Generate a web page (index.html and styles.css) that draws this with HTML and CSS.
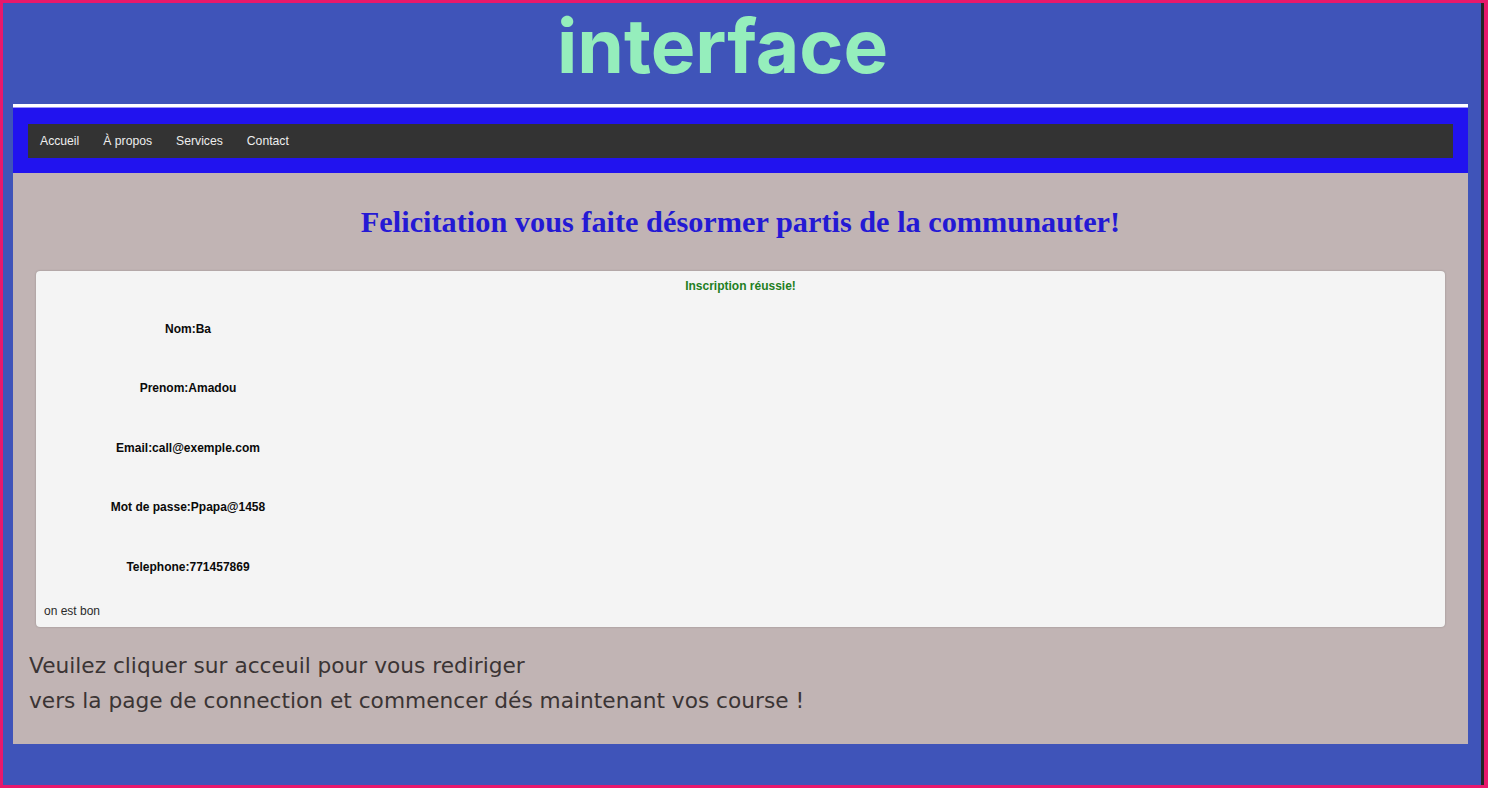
FILE: index.html
```html
<!DOCTYPE html>
<html lang="fr">
<head>
<meta charset="utf-8">
<title>interface</title>
<link rel="stylesheet" href="styles.css">
</head>
<body>
<div class="frame">
  <div class="page">
    <header class="header">
      <h1 class="title">interface</h1>
    </header>
    <nav class="nav-wrap">
      <ul class="nav-bar">
        <li><a class="nav-link" href="#">Accueil</a></li>
        <li><a class="nav-link" href="#">À propos</a></li>
        <li><a class="nav-link" href="#">Services</a></li>
        <li><a class="nav-link" href="#">Contact</a></li>
      </ul>
    </nav>
    <main class="content">
      <h2 class="congrats">Felicitation vous faite désormer partis de la communauter!</h2>
      <section class="card">
        <p class="success">Inscription réussie!</p>
        <div class="fields">
          <p class="field">Nom:Ba</p>
          <p class="field">Prenom:Amadou</p>
          <p class="field">Email:call@exemple.com</p>
          <p class="field">Mot de passe:Ppapa@1458</p>
          <p class="field">Telephone:771457869</p>
        </div>
        <p class="note">on est bon</p>
      </section>
      <p class="redirect">Veuilez cliquer sur acceuil pour vous rediriger<br>vers la page de connection et commencer dés maintenant vos course !</p>
    </main>
  </div>
</div>
</body>
</html>
```

FILE: styles.css
```css
* { box-sizing: border-box; }
html, body { margin: 0; padding: 0; }
body {
  width: 1488px;
  height: 788px;
  overflow: hidden;
  font-family: "Liberation Sans", Arial, sans-serif;
}
.frame {
  height: 788px;
  border: 3px solid #e8186c;
  border-right-width: 4px;
}
.page {
  height: 100%;
  background: #3f54b9;
  border-right: 3px solid #262626;
  padding: 0 13px 0 10px;
}
.header {
  height: 101px;
  padding-right: 36px;
  text-align: center;
}
.title {
  margin: 0;
  font-family: Inter, "Liberation Sans", sans-serif;
  font-weight: 700;
  font-size: 75px;
  line-height: 85px;
  color: #95eebc;
}
.nav-wrap {
  border-top: 3px solid #ffffff;
  background: #2113ef;
  padding: 17px 15px 15px;
  box-shadow: inset 0 1px 0 #9a94f4;
}
.nav-bar {
  list-style: none;
  margin: 0;
  padding: 0;
  height: 34px;
  background: #333333;
  display: flex;
  align-items: center;
}
.nav-link {
  display: block;
  padding: 0 12px;
  color: #eeeeee;
  text-decoration: none;
  font-size: 12.2px;
  line-height: 34px;
}
.content {
  background: #c1b4b4;
  height: 571px;
  padding: 30px 16px 0;
}
.congrats {
  margin: 0 0 30px;
  text-align: center;
  font-family: "Liberation Serif", "Times New Roman", serif;
  font-weight: 700;
  font-size: 30.3px;
  line-height: 38px;
  color: #2419d4;
}
.card {
  margin: 0 7px;
  background: #f4f4f4;
  border-radius: 4px;
  box-shadow: 0 0 2px rgba(0,0,0,0.25);
  padding: 8px 8px 9px;
  height: 356px;
}
.success {
  margin: 0;
  text-align: center;
  font-size: 12px;
  line-height: 14px;
  font-weight: 700;
  color: #1f7f1f;
}
.fields {
  width: 288px;
  margin-top: 29px;
  display: flex;
  flex-direction: column;
  gap: 45.4px;
}
.field {
  margin: 0;
  text-align: center;
  font-size: 12px;
  line-height: 14px;
  font-weight: 700;
  color: #0a0a0a;
}
.note {
  margin: 30px 0 0;
  font-size: 12px;
  line-height: 14px;
  color: #2a2a2a;
}
.redirect {
  margin: 21px 0 0;
  font-family: "DejaVu Sans", Verdana, sans-serif;
  font-size: 21.7px;
  line-height: 35px;
  color: #3b3434;
}
```
